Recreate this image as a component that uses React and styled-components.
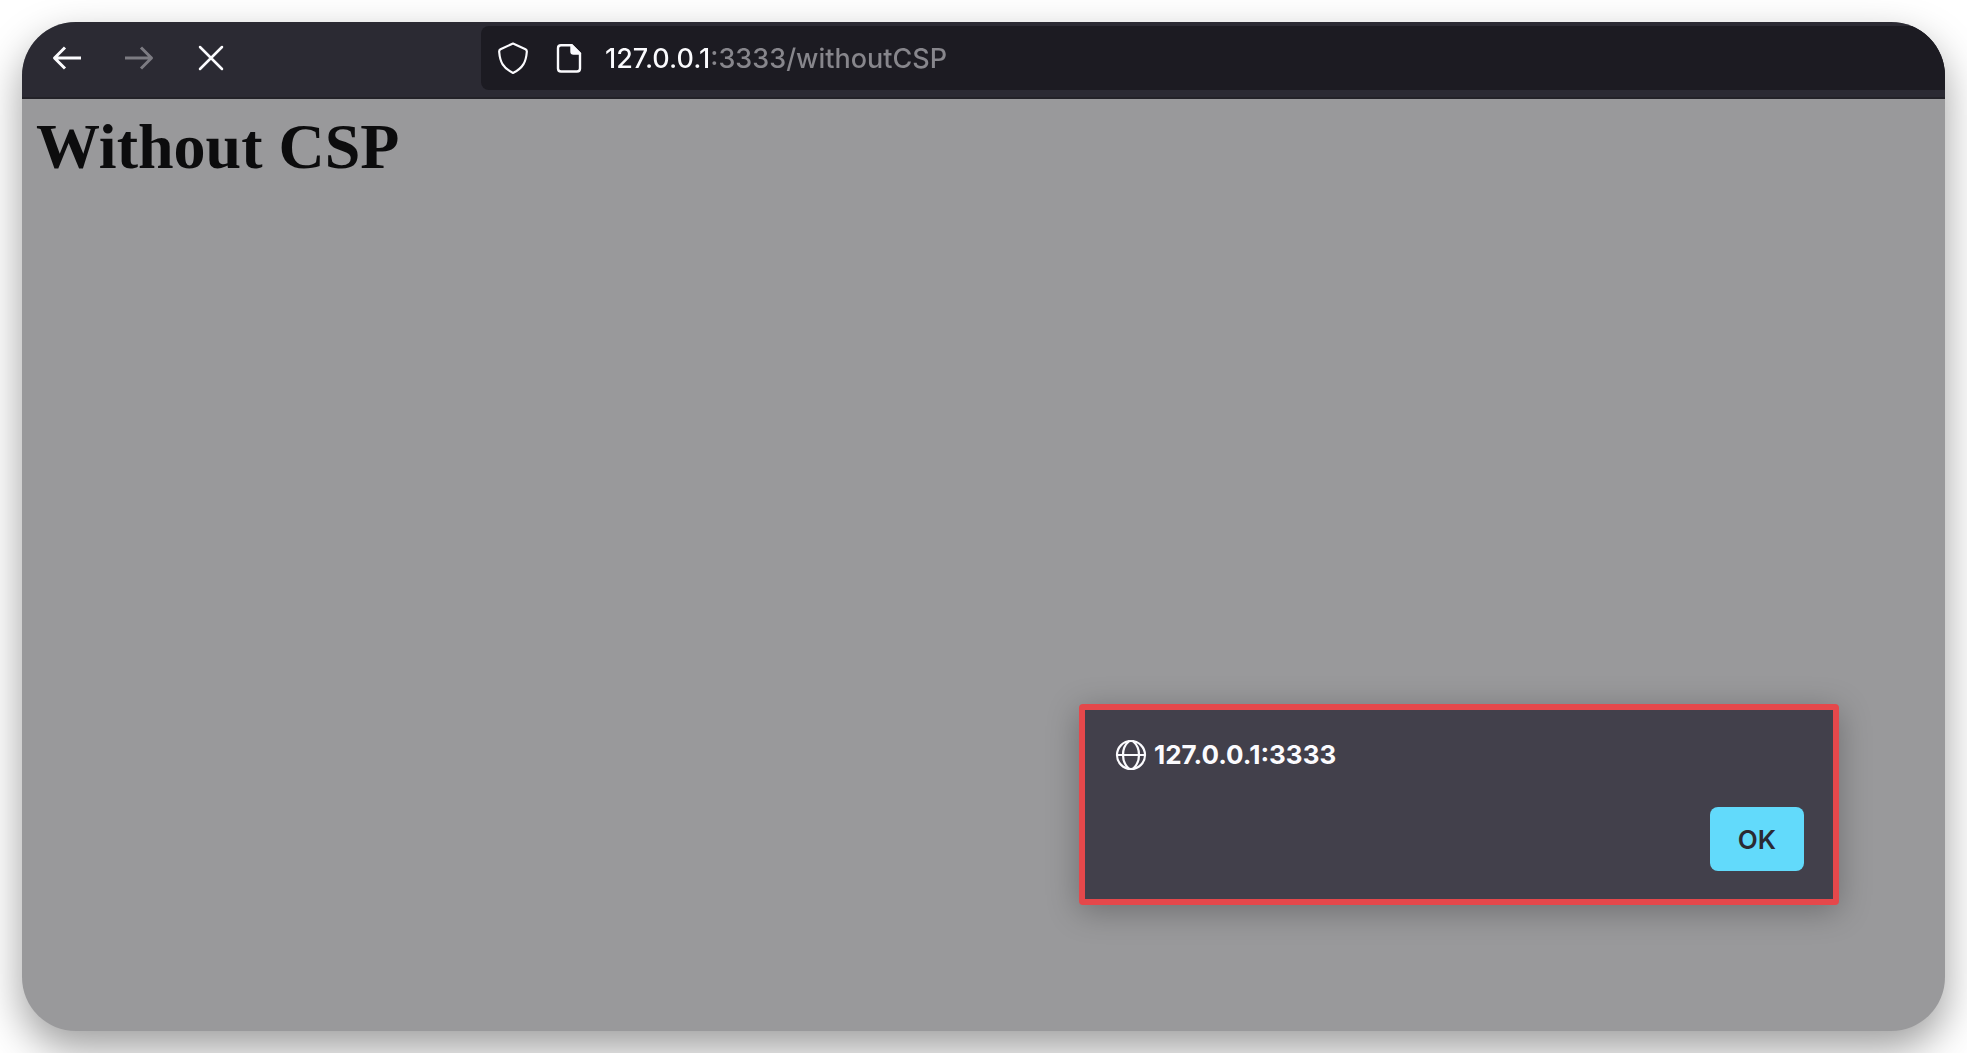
import React, { useState } from "react";
import styled, { createGlobalStyle } from "styled-components";

const GlobalStyle = createGlobalStyle`
  * {
    box-sizing: border-box;
  }

  body {
    margin: 0;
    background-color: #fff;
    font-family: Inter, "Liberation Sans", sans-serif;
  }
`;

const Desktop = styled.div`
  display: flex;
  min-height: 100vh;
  padding: 22px;
  overflow: hidden;
`;

const BrowserWindow = styled.div`
  flex: 1;
  display: flex;
  flex-direction: column;
  overflow: hidden;
  border-radius: 54px;
  background-color: #99999b;
  box-shadow: 0 18px 42px rgba(0, 0, 0, 0.38);
`;

const Toolbar = styled.header`
  display: flex;
  align-items: flex-start;
  height: 77px;
  padding-top: 4px;
  background-color: #2b2a33;
  border-bottom: 2px solid #232228;
`;

const NavButtons = styled.nav`
  display: flex;
  gap: 8px;
  flex: 0 0 459px;
  padding-left: 13px;
`;

const NavButton = styled.button`
  display: flex;
  align-items: center;
  justify-content: center;
  width: 64px;
  height: 64px;
  padding: 0;
  border: none;
  background: none;
  color: #fbfbfe;
  cursor: pointer;

  &:disabled {
    color: #7c7b82;
    cursor: default;
  }
`;

const UrlBar = styled.div`
  flex: 1;
  display: flex;
  align-items: center;
  gap: 24px;
  height: 64px;
  padding-left: 16px;
  border-radius: 8px 0 0 8px;
  background-color: #1c1b22;
  color: #fbfbfe;
`;

const BarIcon = styled.svg`
  flex: none;
  width: 32px;
  height: 32px;
`;

const AddressGroup = styled.div`
  flex: 1;
  display: flex;
  align-items: center;
  gap: 20px;
`;

/* host is bright, the rest of the address is dimmed */
const UrlInput = styled.input`
  flex: 1;
  min-width: 0;
  height: 40px;
  padding: 0;
  border: none;
  outline: none;
  background: linear-gradient(90deg, #fbfbfe 106px, #87868c 106px);
  background-clip: text;
  -webkit-background-clip: text;
  color: transparent;
  caret-color: #fbfbfe;
  font-family: inherit;
  font-size: 27px;
  font-weight: 500;
`;

const Page = styled.main`
  flex: 1;
  display: flex;
  flex-direction: column;
  justify-content: space-between;
  padding: 12px 106px 126px 14px;
`;

const Title = styled.h1`
  margin: 0;
  color: #0c0c0d;
  font-family: "Liberation Serif", serif;
  font-size: 64px;
  line-height: 72px;
  font-weight: bold;
`;

const Dialog = styled.section`
  align-self: flex-end;
  display: flex;
  flex-direction: column;
  gap: 32px;
  width: 100%;
  max-width: 760px;
  padding: 25px 29px 28px 30px;
  border: 6px solid #e5484b;
  border-radius: 4px;
  background-color: #42404b;
  box-shadow: 0 6px 32px rgba(0, 0, 0, 0.28);
`;

const DialogHeader = styled.div`
  display: flex;
  align-items: center;
  gap: 7px;
  color: #fbfbfe;
`;

const DialogTitle = styled.h2`
  margin: 0;
  font-size: 26px;
  line-height: 40px;
  font-weight: 700;
`;

const DialogActions = styled.div`
  display: flex;
  justify-content: flex-end;
`;

const OkButton = styled.button`
  width: 94px;
  height: 64px;
  padding: 0;
  border: none;
  border-radius: 8px;
  background-color: #62dafb;
  color: #2b2a33;
  font-family: inherit;
  font-size: 26px;
  font-weight: 600;
  cursor: pointer;
`;

const stroke = {
  fill: "none",
  stroke: "currentColor",
  strokeLinecap: "round",
  strokeLinejoin: "round",
};

function BackIcon() {
  return (
    <svg width="32" height="32" viewBox="0 0 32 32" strokeWidth="3" {...stroke}>
      <path d="M30 16H4M14 5.5L3.5 16l10.5 10.5" strokeLinecap="butt" />
    </svg>
  );
}

function ForwardIcon() {
  return (
    <svg width="32" height="32" viewBox="0 0 32 32" strokeWidth="3" {...stroke}>
      <path d="M2 16h26M18 5.5L28.5 16 18 26.5" strokeLinecap="butt" />
    </svg>
  );
}

function StopIcon() {
  return (
    <svg width="32" height="32" viewBox="0 0 32 32" strokeWidth="2.5" {...stroke}>
      <path d="M5 5l22 22M27 5L5 27" />
    </svg>
  );
}

function ShieldIcon() {
  return (
    <BarIcon viewBox="0 0 32 32" strokeWidth="2.2" {...stroke}>
      <path d="M16 1.5L28.5 7.2Q30 8 29.8 10C29 20 26 26 16 31C6 26 3 20 2.2 10Q2 8 3.5 7.2Z" />
    </BarIcon>
  );
}

function FileIcon() {
  return (
    <BarIcon viewBox="0 0 32 32" strokeWidth="2.4" {...stroke}>
      <path d="M18.5 3.2H8Q5 3.2 5 6.2V26.5Q5 29.5 8 29.5H24Q27 29.5 27 26.5V11.5Z" />
      <path d="M18.5 3.2V9.5Q18.5 11.5 20.5 11.5H27Z" fill="currentColor" />
    </BarIcon>
  );
}

function GlobeIcon() {
  return (
    <svg width="32" height="32" viewBox="0 0 32 32" strokeWidth="2.2" {...stroke}>
      <circle cx="16" cy="16" r="14" />
      <path d="M2 16h28M14 2.2C6 9 6 23 14 29.8M18 2.2C26 9 26 23 18 29.8" />
    </svg>
  );
}

export default function App() {
  const [url, setUrl] = useState("127.0.0.1:3333/withoutCSP");
  const [open, setOpen] = useState(true);

  return (
    <Desktop>
      <GlobalStyle />
      <BrowserWindow>
        <Toolbar>
          <NavButtons>
            <NavButton aria-label="Back">
              <BackIcon />
            </NavButton>
            <NavButton aria-label="Forward" disabled>
              <ForwardIcon />
            </NavButton>
            <NavButton aria-label="Stop">
              <StopIcon />
            </NavButton>
          </NavButtons>
          <UrlBar>
            <ShieldIcon />
            <AddressGroup>
              <FileIcon />
              <UrlInput
                aria-label="Address"
                value={url}
                spellCheck={false}
                onChange={(e) => setUrl(e.target.value)}
              />
            </AddressGroup>
          </UrlBar>
        </Toolbar>
        <Page>
          <Title>Without CSP</Title>
          {open && (
            <Dialog role="alertdialog" aria-labelledby="dialog-title">
              <DialogHeader>
                <GlobeIcon />
                <DialogTitle id="dialog-title">127.0.0.1:3333</DialogTitle>
              </DialogHeader>
              <DialogActions>
                <OkButton onClick={() => setOpen(false)}>OK</OkButton>
              </DialogActions>
            </Dialog>
          )}
        </Page>
      </BrowserWindow>
    </Desktop>
  );
}
